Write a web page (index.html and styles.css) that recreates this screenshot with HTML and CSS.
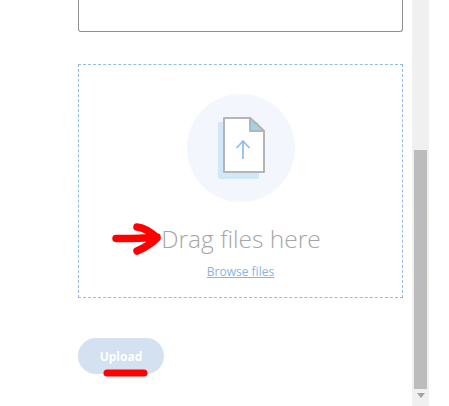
FILE: index.html
```html
<!DOCTYPE html>
<html lang="en">
<head>
    <meta charset="UTF-8">
    <meta name="viewport" content="width=device-width, initial-scale=1.0">
    <title>Upload files</title>
    <link rel="stylesheet" href="styles.css">
</head>
<body>
    <div class="page">
        <main class="content">
            <div class="text-box"></div>
            <div class="dropzone">
                <div class="icon-circle">
                    <svg class="file-icon" width="108" height="108" viewBox="0 0 108 108">
                        <rect x="31" y="28" width="41" height="57" rx="2" fill="#d0e8f7"/>
                        <path d="M37 24H63L77 37V78H37Z" fill="#fff" stroke="#b5b5b5" stroke-width="2" stroke-linejoin="round"/>
                        <path d="M63 24V37H77Z" fill="#9dd3f0" stroke="#b5b5b5" stroke-width="2" stroke-linejoin="round"/>
                        <path d="M56 65V47M49.500 54L56 47L62.500 54" fill="none" stroke="#93bfe8" stroke-width="1.800"/>
                    </svg>
                </div>
                <div class="drag-text">Drag files here</div>
                <a class="browse-link" href="#">Browse files</a>
            </div>
            <button class="upload-btn">Upload</button>
        </main>
        <div class="scrollbar">
            <div class="scrollbar-track">
                <div class="scrollbar-thumb"></div>
            </div>
            <div class="scrollbar-arrow"></div>
        </div>
        <div class="gutter"></div>
    </div>

    <!-- red annotations painted over the screenshot -->
    <svg class="annotation" width="449" height="406" viewBox="0 0 449 406">
        <path d="M116 238.500C130 239 145 238 157 237M137 227C145 228 152 233 157 238C152 243 144 248 137 251" fill="none" stroke="#f00" stroke-width="7.500" stroke-linecap="round" stroke-linejoin="round"/>
        <path d="M107 373H144" fill="none" stroke="#f00" stroke-width="7" stroke-linecap="round"/>
    </svg>
</body>
</html>
```

FILE: styles.css
```css
* {
    margin: 0;
    padding: 0;
    box-sizing: border-box;
}

body {
    font-family: "Open Sans", "Noto Sans", sans-serif;
    background-color: #fff;
    height: 406px;
    overflow: hidden;
}

.page {
    display: flex;
    height: 406px;
}

.content {
    width: 412px;
    padding-left: 78px;
    padding-right: 9px;
}

/* Textarea scrolled off the top */
.text-box {
    height: 32px;
    border: 1px solid #8f8f8f;
    border-top: none;
    border-radius: 0 0 3px 3px;
    margin-bottom: 32px;
}

.dropzone {
    height: 234px;
    border: 1px dashed #8fbce8;
    padding-top: 29px;
    display: flex;
    flex-direction: column;
    align-items: center;
}

.icon-circle {
    width: 108px;
    height: 108px;
    border-radius: 50%;
    background-color: #f3f6fc;
}

.file-icon {
    display: block;
}

.drag-text {
    font-size: 24.500px;
    font-weight: 300;
    line-height: 34px;
    color: #a6a6a6;
    margin-top: 20px;
    padding-left: 1px;
}

.browse-link {
    font-size: 12px;
    line-height: 16px;
    color: #85b5e6;
    margin-top: 8px;
}

.upload-btn {
    display: block;
    width: 86px;
    height: 36px;
    margin-top: 40px;
    border: none;
    border-radius: 18px;
    background-color: #d3e1f1;
    color: #fff;
    font-family: inherit;
    font-size: 12px;
    font-weight: 700;
}

/* Fake browser scrollbar */
.scrollbar {
    width: 17px;
    height: 406px;
    background-color: #f0f0f0;
    display: flex;
    flex-direction: column;
    align-items: center;
}

.scrollbar-track {
    flex: 1;
    width: 13px;
    padding-top: 150px;
}

.scrollbar-thumb {
    height: 239px;
    background-color: #bcbcbc;
}

.scrollbar-arrow {
    width: 0;
    height: 0;
    margin: 4px 0 8px;
    border-left: 4px solid transparent;
    border-right: 4px solid transparent;
    border-top: 5px solid #a3a3a3;
}

.gutter {
    flex: 1;
}

.annotation {
    position: absolute;
    top: 0;
    left: 0;
    pointer-events: none;
}
```
